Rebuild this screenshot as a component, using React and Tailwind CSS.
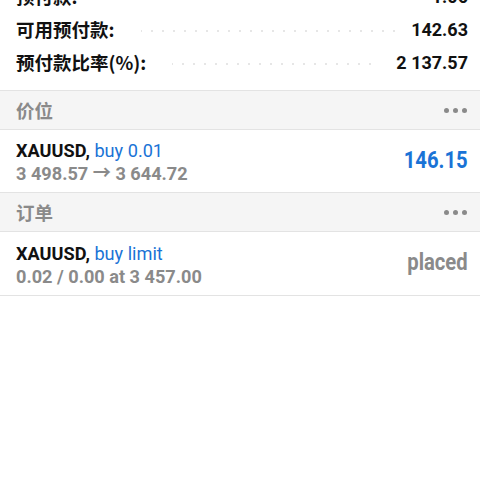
const font = { fontFamily: 'Roboto, "Noto Sans CJK SC", sans-serif' };
const cjk = { fontFamily: '"Noto Sans CJK SC", Roboto, sans-serif' };

const stats = [
  { label: '预付款:', value: '1.06' },
  { label: '可用预付款:', value: '142.63' },
  { label: '预付款比率(%):', value: '2 137.57' },
];

const leaderDots = Array.from({ length: 40 });

const StatRow = ({ label, value }) => (
  <div className="flex h-[33px] items-center pl-4 pr-3">
    <span className="text-[18.5px] font-bold leading-none text-[#111]" style={cjk}>{label}</span>
    <div className="ml-[26px] mr-[16px] flex flex-1 items-center justify-center gap-[9px] overflow-hidden pt-[3px]">
      {leaderDots.map((_, i) => (
        <div key={i} className="h-[2px] w-[2px] shrink-0 rounded-full bg-[#dedede]" />
      ))}
    </div>
    <span className="text-[18px] font-bold text-[#111]">{value}</span>
  </div>
);

const SectionHeader = ({ title }) => (
  <div className="flex h-[40px] items-center justify-between border-y border-[#e3e3e3] bg-[#f5f5f5] pl-4 pr-[13px]">
    <span className="text-[18.5px] font-bold leading-none text-[#8a8a8a]" style={cjk}>{title}</span>
    <div className="flex gap-[4px]">
      <div className="h-[5px] w-[5px] rounded-full bg-[#8a8a8a]" />
      <div className="h-[5px] w-[5px] rounded-full bg-[#8a8a8a]" />
      <div className="h-[5px] w-[5px] rounded-full bg-[#8a8a8a]" />
    </div>
  </div>
);

const Item = ({ symbol, action, detail, right, rightClass, last }) => (
  <div className={`flex items-center justify-between pl-4 pr-3 ${last ? 'h-[64px] border-b border-[#e3e3e3]' : 'h-[62px]'}`}>
    <div className="flex flex-col pt-[2px] leading-[23px]">
      <div className="origin-left scale-x-[0.955] whitespace-nowrap text-[19px]">
        <span className="font-bold text-[#111]">{symbol}, </span>
        <span className="text-[#1a73d6]">{action}</span>
      </div>
      <div className="origin-left scale-x-[0.955] whitespace-nowrap text-[19px] font-bold text-[#8a8a8a]">{detail}</div>
    </div>
    <div className={`origin-right scale-x-[0.88] text-[23px] font-bold ${rightClass}`}>{right}</div>
  </div>
);

export default function App() {
  return (
    <div className="h-[502px] w-[480px] overflow-hidden bg-white" style={font}>
      <div className="mt-[-20px] pb-[11px]">
        {stats.map((s) => (
          <StatRow key={s.label} {...s} />
        ))}
      </div>

      <SectionHeader title="价位" />
      <Item
        symbol="XAUUSD"
        action="buy 0.01"
        detail="3 498.57 → 3 644.72"
        right="146.15"
        rightClass="text-[#1a73d6]"
      />

      <SectionHeader title="订单" />
      <Item
        symbol="XAUUSD"
        action="buy limit"
        detail="0.02 / 0.00 at 3 457.00"
        right="placed"
        rightClass="text-[#8a8a8a]"
        last
      />
    </div>
  );
}
